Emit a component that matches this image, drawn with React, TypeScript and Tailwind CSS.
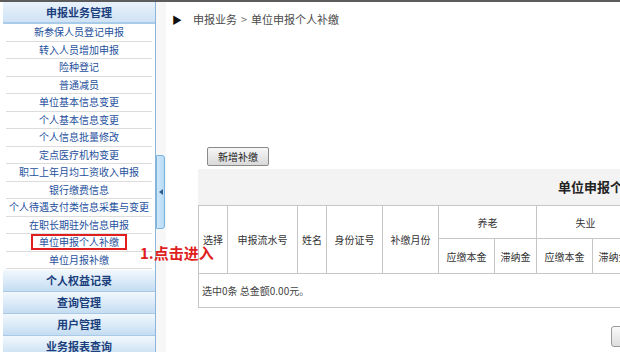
const font = { fontFamily: '"Noto Sans CJK SC", "Noto Sans", sans-serif' }

const items = [
  '新参保人员登记申报',
  '转入人员增加申报',
  '险种登记',
  '普通减员',
  '单位基本信息变更',
  '个人基本信息变更',
  '个人信息批量修改',
  '定点医疗机构变更',
  '职工上年月均工资收入申报',
  '银行缴费信息',
  '个人待遇支付类信息采集与变更',
  '在职长期驻外信息申报',
  '单位申报个人补缴',
  '单位月报补缴',
]

const groups = ['个人权益记录', '查询管理', '用户管理', '业务报表查询']

function Sidebar() {
  return (
    <div className="w-[156px] shrink-0 border-r border-[#8db5dc] pl-[3px] flex flex-col bg-white overflow-hidden">
      <div className="h-[22px] shrink-0 flex items-center justify-center bg-gradient-to-b from-[#e9f2fb] to-[#cfe2f4] border-b-2 border-[#a8cbea] text-[11px] font-bold text-[#1b3f7c]">
        申报业务管理
      </div>
      <div className="flex flex-col shrink-0">
        {items.map((it, i) => (
          <div
            key={it}
            className="h-[17.5px] shrink-0 mx-[3px] flex items-center justify-center border-b border-[#dcdcdc] text-[10px] text-[#1e4f9c] whitespace-nowrap leading-none"
          >
            {i === 12 ? (
              <span className="border-2 border-[#e01e1e] px-[6px] py-[1px] leading-none">{it}</span>
            ) : (
              it
            )}
          </div>
        ))}
      </div>
      <div className="h-[1px] shrink-0" />
      {groups.map((g) => (
        <div
          key={g}
          className="h-[22px] shrink-0 flex items-center justify-center bg-gradient-to-b from-[#f2f8fd] via-[#dcebf8] to-[#c4dcf1] border-b border-[#a9c9e6] text-[11px] font-bold text-[#1b3f7c]"
        >
          {g}
        </div>
      ))}
    </div>
  )
}

function Splitter() {
  return (
    <div className="w-[10px] shrink-0 relative bg-[#f7f7f7]">
      <div className="absolute left-0 top-[153px] w-[9px] h-[74px] rounded-r-[3px] border border-[#7cb4e0] bg-gradient-to-r from-[#cfe7f9] to-[#b8dbf5] flex items-center justify-center">
        <div className="w-0 h-0 border-y-[3px] border-y-transparent border-r-[4px] border-r-[#2d5f90]" />
      </div>
    </div>
  )
}

const th = 'border border-[#c6c6c6] text-[10px] font-normal text-[#333] text-center align-middle'

function Main() {
  return (
    <div className="flex-1 overflow-hidden bg-white">
      <div className="h-[34px] flex items-center pl-[6px] pt-[1px] text-[11px] text-[#4a4a4a]">
        <span className="text-[10px] text-[#111] mr-[11px]">▶</span>
        <span>申报业务</span>
        <span className="mx-[4px] text-[#777]">&gt;</span>
        <span>单位申报个人补缴</span>
      </div>
      <div className="h-[111px]" />
      <div className="pl-[41px] h-[22px] flex items-start">
        <button className="h-[19px] px-[10px] rounded-[2px] border border-[#8a8a8a] bg-gradient-to-b from-[#f7f7f7] to-[#d9d9d9] text-[10px] text-[#222] leading-none">
          新增补缴
        </button>
      </div>
      <div className="ml-[32px] w-[850px]">
        <div className="h-[36px] bg-[#f3f3f3] flex items-center justify-center text-[13px] font-bold text-[#222]">
          单位申报个人补缴明细
        </div>
        <table className="table-fixed border-collapse w-[850px]">
          <colgroup>
            <col className="w-[29px]" />
            <col className="w-[70px]" />
            <col className="w-[29px]" />
            <col className="w-[56px]" />
            <col className="w-[56px]" />
            <col className="w-[56px]" />
            <col className="w-[42px]" />
            <col className="w-[56px]" />
            <col className="w-[42px]" />
            <col className="w-[56px]" />
            <col className="w-[42px]" />
            <col className="w-[56px]" />
            <col />
          </colgroup>
          <thead>
            <tr className="h-[33px]">
              <th rowSpan={2} className={th}>选择</th>
              <th rowSpan={2} className={th}>申报流水号</th>
              <th rowSpan={2} className={th}>姓名</th>
              <th rowSpan={2} className={th}>身份证号</th>
              <th rowSpan={2} className={th}>补缴月份</th>
              <th colSpan={2} className={th}>养老</th>
              <th colSpan={2} className={th}>失业</th>
              <th colSpan={2} className={th}>工伤</th>
              <th colSpan={2} className={th}>生育</th>
            </tr>
            <tr className="h-[35px]">
              <th className={th}>应缴本金</th>
              <th className={th}>滞纳金</th>
              <th className={th}>应缴本金</th>
              <th className={th}>滞纳金</th>
              <th className={th}>应缴本金</th>
              <th className={th}>滞纳金</th>
              <th className={th}>应缴本金</th>
              <th className={th}>滞纳金</th>
            </tr>
          </thead>
        </table>
        <div className="h-[34px] border-l border-b border-[#c6c6c6] flex items-center pl-[3px] text-[10px] text-[#444]">
          选中0条 总金额0.00元。
        </div>
        <div className="pl-[413px] pt-[18px] flex">
          <button className="h-[21px] w-[60px] rounded-[3px] border border-[#9a9a9a] bg-gradient-to-b from-[#fafafa] to-[#dedede] text-[10px] text-[#222]">
            提交
          </button>
        </div>
      </div>
    </div>
  )
}

export default function App() {
  return (
    <div style={font} className="w-[620px] h-[352px] overflow-hidden relative bg-white border-t-2 border-[#5c5c5c]">
      <div className="flex h-full">
        <Sidebar />
        <Splitter />
        <Main />
      </div>
      <div className="absolute left-[140px] top-[243px] text-[15px] font-bold text-[#e01e1e] leading-none">
        1.点击进入
      </div>
    </div>
  )
}
